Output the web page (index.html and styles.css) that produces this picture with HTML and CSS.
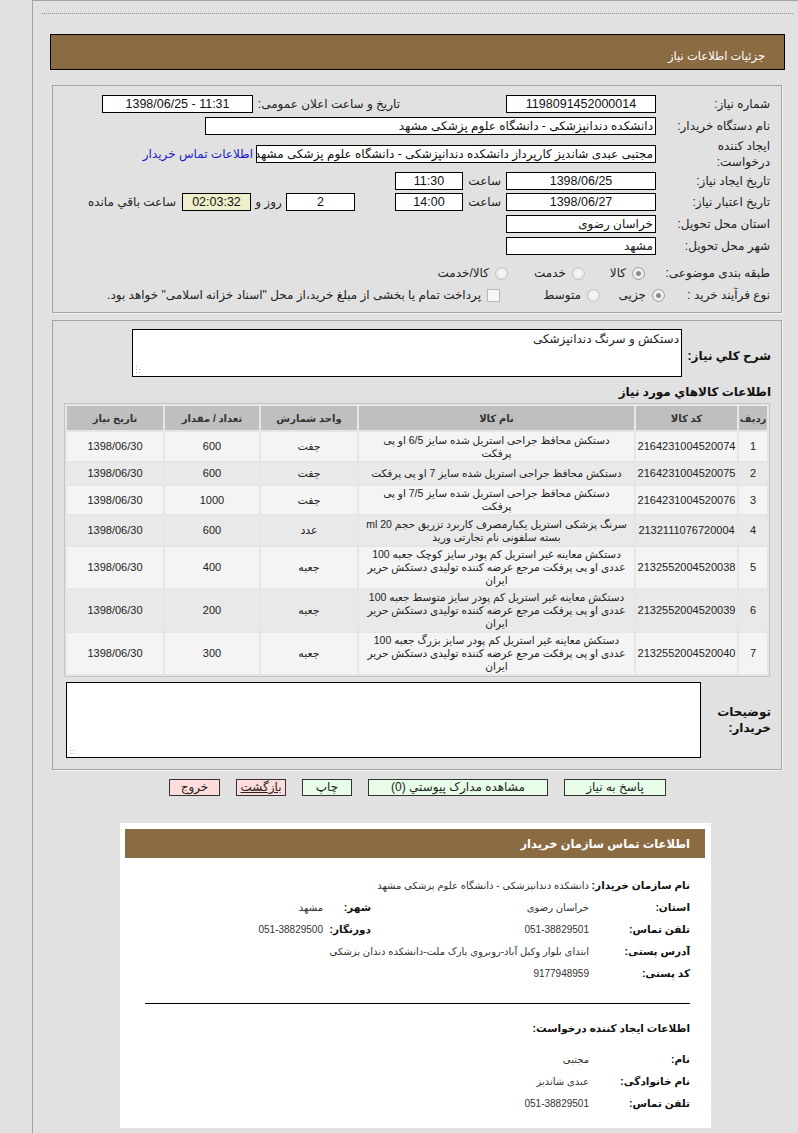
FILE: index.html
```html
<!DOCTYPE html>
<html lang="fa" dir="rtl">
<head>
<meta charset="utf-8">
<title>جزئیات اطلاعات نیاز</title>
<link rel="stylesheet" href="styles.css">
</head>
<body>
<div class="frame">
  <div class="dots"></div>
  <div class="titlebar">جزئیات اطلاعات نیاز</div>

  <div class="panel p1">
    <div class="row r1">
      <div class="lbl">شماره نیاز:</div>
      <div class="box w150">1198091452000014</div>
      <div class="lbl2 announce">تاریخ و ساعت اعلان عمومی:</div>
      <div class="box w151">1398/06/25 - 11:31</div>
    </div>
    <div class="row r2">
      <div class="lbl">نام دستگاه خریدار:</div>
      <div class="box w451 txt">دانشکده دندانپزشکی - دانشگاه علوم پزشکی مشهد</div>
    </div>
    <div class="row r3">
      <div class="lbl">ایجاد کننده<br>درخواست:</div>
      <div class="box w400 txt">مجتبی عبدی شاندیز کارپرداز دانشکده دندانپزشکی - دانشگاه علوم پزشکی مشهد</div>
      <a class="link" href="#">اطلاعات تماس خریدار</a>
    </div>
    <div class="row r4">
      <div class="lbl">تاریخ ایجاد نیاز:</div>
      <div class="box w150">1398/06/25</div>
      <div class="saat">ساعت</div>
      <div class="box w68">11:30</div>
    </div>
    <div class="row r5">
      <div class="lbl">تاریخ اعتبار نیاز:</div>
      <div class="box w150">1398/06/27</div>
      <div class="saat">ساعت</div>
      <div class="box w68">14:00</div>
      <div class="box w69 gap40">2</div>
      <div class="rooz">روز و</div>
      <div class="box w69 timer">02:03:32</div>
      <div class="remain">ساعت باقي مانده</div>
    </div>
    <div class="row r6">
      <div class="lbl">استان محل تحویل:</div>
      <div class="box w150 txt">خراسان رضوی</div>
    </div>
    <div class="row r7">
      <div class="lbl">شهر محل تحویل:</div>
      <div class="box w150 txt">مشهد</div>
    </div>
    <div class="row r8">
      <div class="lbl lw125">طبقه بندی موضوعی:</div>
      <div class="opt ow60"><span class="radio on"></span><span>کالا</span></div>
      <div class="opt ow77"><span class="radio"></span><span>خدمت</span></div>
      <div class="opt"><span class="radio"></span><span>کالا/خدمت</span></div>
    </div>
    <div class="row r9">
      <div class="lbl lw105">نوع فرآیند خرید :</div>
      <div class="opt ow65"><span class="radio on"></span><span>جزیی</span></div>
      <div class="opt ow100"><span class="radio"></span><span>متوسط</span></div>
      <div class="opt"><span class="check"></span><span>پرداخت تمام یا بخشی از مبلغ خرید،از محل "اسناد خزانه اسلامی" خواهد بود.</span></div>
    </div>
  </div>

  <div class="panel p2">
    <div class="desc-row">
      <div class="blbl bw89">شرح کلي نیاز:</div>
      <div class="tarea t1">دستکش و سرنگ دندانپزشکی
        <svg class="grip" width="6" height="8" viewBox="0 0 6 8"><g fill="#b0b0b0"><rect x="0" y="1" width="1" height="1"/><rect x="0" y="4" width="1" height="1"/><rect x="0" y="7" width="1" height="1"/><rect x="3" y="4" width="1" height="1"/><rect x="3" y="7" width="1" height="1"/></g></svg>
      </div>
    </div>
    <div class="sect">اطلاعات کالاهاي مورد نیاز</div>
    <table class="items">
      <thead>
        <tr>
          <th class="c-idx">ردیف</th>
          <th class="c-code">کد کالا</th>
          <th class="c-name">نام کالا</th>
          <th class="c-unit">واحد شمارش</th>
          <th class="c-qty">تعداد / مقدار</th>
          <th class="c-date">تاریخ نیاز</th>
        </tr>
      </thead>
      <tbody>
        <tr class="tall">
          <td>1</td><td>2164231004520074</td>
          <td class="name">دستکش محافظ جراحی استریل شده سایز 6/5 او پی<br>پرفکت</td>
          <td>جفت</td><td>600</td><td>1398/06/30</td>
        </tr>
        <tr>
          <td>2</td><td>2164231004520075</td>
          <td class="name">دستکش محافظ جراحی استریل شده سایز 7 او پی پرفکت</td>
          <td>جفت</td><td>600</td><td>1398/06/30</td>
        </tr>
        <tr class="bi">
          <td>3</td><td>2164231004520076</td>
          <td class="name">دستکش محافظ جراحی استریل شده سایز 7/5 او پی<br>پرفکت</td>
          <td>جفت</td><td>1000</td><td>1398/06/30</td>
        </tr>
        <tr class="tall">
          <td>4</td><td>2132111076720004</td>
          <td class="name">سرنگ پزشکی استریل یکبارمصرف کاربرد تزریق حجم 20 ml<br>بسته سلفونی نام تجارتی ورید</td>
          <td>عدد</td><td>600</td><td>1398/06/30</td>
        </tr>
        <tr class="tri">
          <td>5</td><td>2132552004520038</td>
          <td class="name">دستکش معاینه غیر استریل کم پودر سایز کوچک جعبه 100<br>عددی او پی پرفکت مرجع عرضه کننده تولیدی دستکش حریر<br>ایران</td>
          <td>جعبه</td><td>400</td><td>1398/06/30</td>
        </tr>
        <tr class="tri">
          <td>6</td><td>2132552004520039</td>
          <td class="name">دستکش معاینه غیر استریل کم پودر سایز متوسط جعبه 100<br>عددی او پی پرفکت مرجع عرضه کننده تولیدی دستکش حریر<br>ایران</td>
          <td>جعبه</td><td>200</td><td>1398/06/30</td>
        </tr>
        <tr class="tri">
          <td>7</td><td>2132552004520040</td>
          <td class="name">دستکش معاینه غیر استریل کم پودر سایز بزرگ جعبه 100<br>عددی او پی پرفکت مرجع عرضه کننده تولیدی دستکش حریر<br>ایران</td>
          <td>جعبه</td><td>300</td><td>1398/06/30</td>
        </tr>
      </tbody>
    </table>
    <div class="desc-row dr2">
      <div class="blbl bw70">توضیحات<br>خریدار:</div>
      <div class="tarea t2">
        <svg class="grip" width="6" height="8" viewBox="0 0 6 8"><g fill="#b0b0b0"><rect x="0" y="1" width="1" height="1"/><rect x="0" y="4" width="1" height="1"/><rect x="0" y="7" width="1" height="1"/><rect x="3" y="4" width="1" height="1"/><rect x="3" y="7" width="1" height="1"/></g></svg>
      </div>
    </div>
  </div>

  <div class="buttons">
    <div class="btn green bw102">پاسخ به نیاز</div>
    <div class="btn green bw180">مشاهده مدارک پیوستي (0)</div>
    <div class="btn green bw50">چاپ</div>
    <div class="btn pink bw50 ul">بازگشت</div>
    <div class="btn pink bw51">خروج</div>
  </div>

  <div class="contact">
    <div class="chead">اطلاعات تماس سازمان خریدار</div>
    <div class="cgrid first">
      <div class="cl">نام سازمان خریدار:</div>
      <div class="cv span3">دانشکده دندانپزشکی - دانشگاه علوم پزشکی مشهد</div>
      <div class="cl">استان:</div>
      <div class="cv">خراسان رضوی</div>
      <div class="cl">شهر:</div>
      <div class="cv">مشهد</div>
      <div class="cl">تلفن تماس:</div>
      <div class="cv">051-38829501</div>
      <div class="cl">دورنگار:</div>
      <div class="cv">051-38829500</div>
      <div class="cl">آدرس پستی:</div>
      <div class="cv span3">ابتدای بلوار وکیل آباد-روبروی پارک ملت-دانشکده دندان پزشکی</div>
      <div class="cl">کد پستی:</div>
      <div class="cv span3">9177948959</div>
    </div>
    <div class="hr"></div>
    <div class="ctitle">اطلاعات ایجاد کننده درخواست:</div>
    <div class="cgrid second">
      <div class="cl">نام:</div>
      <div class="cv span3">مجتبی</div>
      <div class="cl">نام خانوادگی:</div>
      <div class="cv span3">عبدی شاندیز</div>
      <div class="cl">تلفن تماس:</div>
      <div class="cv span3">051-38829501</div>
    </div>
  </div>
</div>
</body>
</html>
```
FILE: styles.css
```css
* { box-sizing: border-box; }
html, body { margin: 0; padding: 0; }
body {
  background: #e1e1e1;
  font-family: "Liberation Sans", "DejaVu Sans", Tahoma, sans-serif;
  font-size: 12px;
  color: #222;
  direction: rtl;
}
.frame {
  margin-left: 32px;
  border-left: 1px solid #a3a3a3;
  border-top: 1px solid #a3a3a3;
  min-height: 1133px;
  padding-top: 12px;
  overflow: hidden;
}
.dots { margin: 0 5px 0 9px; border-top: 1px dotted #8e8e8e; }
.titlebar {
  margin: 20px 13px 0 17px;
  height: 36px;
  background: #8b6b42;
  border: 1px solid #000;
  color: #fff;
  font-size: 11.5px;
  padding: 8px 19px 0 0;
  display: flex;
  align-items: center;
}
.panel {
  border: 1px solid #a3a3a3;
  box-shadow: 1px 1px 0 #f4f4f4;
}
.p1 { margin: 15px 16px 0 19px; padding: 7px 11px 6px 0; }
.row { display: flex; align-items: center; }
.r1, .r2, .r5 { height: 22px; }
.r3 { height: 34px; }
.r4 { height: 20px; }
.r6 { height: 21px; }
.r7 { height: 23px; }
.r8 { height: 22px; margin-top: 5px; }
.r9 { height: 22px; }
.lbl { width: 114px; flex: none; text-align: right; line-height: 16px; }
.lw125 { width: 125px; }
.lw105 { width: 105px; }
.box {
  flex: none;
  height: 18px;
  border: 1px solid #000;
  background: #fff;
  font-size: 12.5px;
  display: flex;
  align-items: center;
  justify-content: center;
  white-space: nowrap;
  overflow: hidden;
  padding: 0 2px;
  color: #111;
  direction: ltr;
}
.box.txt { justify-content: flex-start; direction: rtl; font-size: 12px; }
.w150 { width: 150px; }
.w151 { width: 151px; }
.w451 { width: 451px; }
.w400 { width: 400px; }
.w68 { width: 68px; }
.w69 { width: 69px; }
.announce { width: 147px; margin-right: 106px; flex: none; white-space: nowrap; }
.saat { width: 43px; flex: none; padding-right: 5px; }
.gap40 { margin-right: 40px; }
.rooz { width: 35px; flex: none; text-align: center; white-space: nowrap; }
.timer { background: #efefcc; }
.remain { margin-right: 6px; white-space: nowrap; }
.link { color: #1a1acc; text-decoration: none; margin-right: 3px; white-space: nowrap; }
.opt { display: flex; align-items: center; gap: 6px; flex: none; white-space: nowrap; }
.ow60 { width: 60px; }
.ow77 { width: 77px; }
.ow65 { width: 65px; }
.ow100 { width: 100px; }
.radio {
  width: 13px; height: 13px; border-radius: 50%;
  border: 1px solid #c2c2c2;
  background: radial-gradient(circle at 50% 50%, #fafafa, #e2e2e2);
  position: relative; flex: none;
}
.radio.on { border-color: #a0a0a0; }
.radio.on::after {
  content: ""; position: absolute; left: 3px; top: 3px;
  width: 5px; height: 5px; border-radius: 50%; background: #8c8c8c;
}
.check {
  width: 13px; height: 13px; border: 1px solid #b8b8b8; background: #f7f7f7; flex: none;
}
.p2 { margin: 7px 16px 0 19px; padding: 8px 10px 11px 12px; }
.desc-row { display: flex; align-items: center; }
.blbl { flex: none; font-weight: bold; font-size: 12px; text-align: right; line-height: 16px; color: #111; }
.bw89 { width: 89px; padding-top: 5px; }
.bw70 { width: 70px; }
.tarea {
  position: relative;
  background: #fff;
  border: 1px solid #000;
  padding: 2px 2px;
  line-height: 15px;
  flex: none;
}
.t1 { width: 550px; height: 48px; }
.t2 { width: 635px; height: 76px; }
.dr2 { margin-top: 5px; }
.grip { position: absolute; left: 3px; bottom: 3px; }
.sect { margin-top: 8px; font-weight: bold; font-size: 12px; line-height: 14px; color: #111; }
.items {
  margin-top: 4px;
  margin-right: 1px;
  width: 704px;
  table-layout: fixed;
  border: 1px solid #c4c4c4;
  border-spacing: 2px;
  background: #e6e6e6;
  font-size: 11px;
}
.items th {
  background: #bfbfbf;
  height: 24px;
  font-weight: bold;
  font-size: 10px;
  color: #333;
  padding: 0;
  white-space: nowrap;
}
.items td {
  height: 21px;
  padding: 0 1px;
  text-align: center;
  line-height: 13px;
  color: #222;
  background: #f4f4f4;
}
.items tr.tall td { height: 29px; }
.items tr.bi td { height: 28px; }
.items tr.tri td { height: 41px; }
.items tbody tr:nth-child(even) td { background: #e9e9e9; }
.items td.name { font-size: 10.5px; white-space: nowrap; overflow: hidden; }
.c-idx { width: 28px; }
.c-code { width: 101px; }
.c-name { width: 275px; }
.c-unit { width: 96px; }
.c-qty { width: 94px; }
.c-date { width: 96px; }
.buttons {
  display: flex;
  gap: 16px;
  margin-top: 9px;
  padding-right: 132px;
}
.btn {
  height: 17px;
  border: 1px solid #333;
  font-size: 12px;
  line-height: 15px;
  text-align: center;
  color: #222;
  white-space: nowrap;
}
.green { background: #e8fde8; }
.pink { background: #ffdcdc; }
.ul { text-decoration: underline; }
.bw102 { width: 102px; }
.bw180 { width: 180px; }
.bw50 { width: 50px; }
.bw51 { width: 51px; }
.contact {
  margin: 27px auto 0 auto;
  width: 591px;
  background: #fff;
  padding: 6px 6px 14px 5px;
}
.chead {
  height: 29px;
  background: #8b6b42;
  color: #fff;
  font-weight: bold;
  font-size: 11.5px;
  display: flex;
  align-items: center;
  padding-right: 15px;
}
.cgrid {
  display: grid;
  grid-template-columns: 101px 218px 48px 1fr;
  grid-auto-rows: 22px;
  align-items: center;
  padding-right: 15px;
}
.cgrid.first { margin-top: 16px; }
.cgrid.second { margin-top: 12px; }
.cl { font-weight: bold; font-size: 10.5px; color: #111; white-space: nowrap; }
.cv { font-size: 10px; color: #333; white-space: nowrap; }
.span3 { grid-column: span 3; }
.hr { margin: 19px 15px 0 20px; border-top: 1px solid #000; }
.ctitle { margin-top: 16px; padding-right: 15px; font-weight: bold; font-size: 10.5px; line-height: 16px; color: #111; }
```
